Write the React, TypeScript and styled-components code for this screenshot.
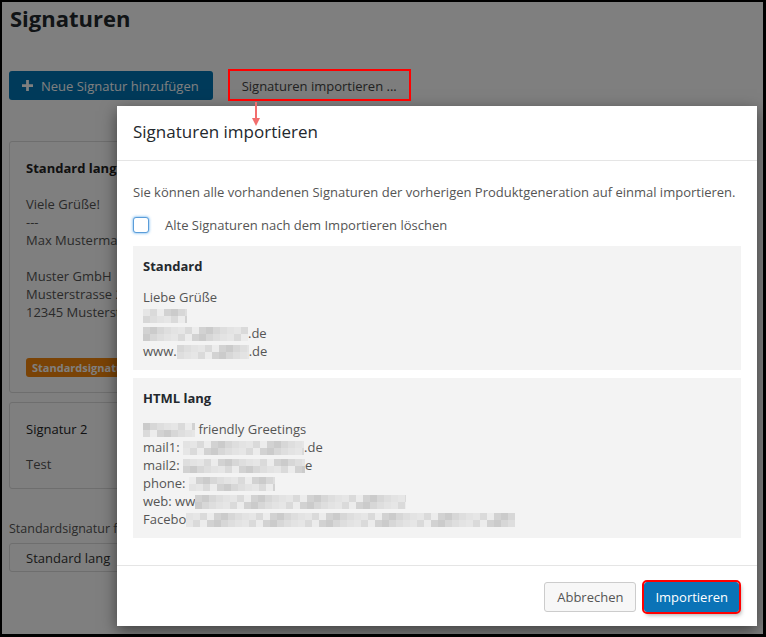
import styled, {createGlobalStyle} from 'styled-components'

const GlobalStyle = createGlobalStyle`
  html, body {
    margin: 0;
    padding: 0;
  }
  body {
    font-family: "Open Sans", "Noto Sans", sans-serif;
    background: #000;
  }
`

const shades = [
  '#dadada',
  '#e6e6e6',
  '#d2d2d2',
  '#ececec',
  '#d7d7d7',
  '#cbcbcb',
  '#e3e3e3',
  '#dedede',
]

// pixelated (redacted) text, drawn as a row of grey cells
function mosaic(width: number, seed: number) {
  const cell = 7
  const stops: string[] = []
  let i = seed % shades.length
  for (let x = 0; x < width; x += cell) {
    stops.push(`${shades[i]} ${x}px ${Math.min(x + cell, width)}px`)
    i = (i * 5 + 3) % shades.length
  }
  return `linear-gradient(90deg, ${stops.join(', ')})`
}

function Redacted({width, seed = 1}: {width: number; seed?: number}) {
  return (
    <Mosaic
      $width={width}
      $top={mosaic(width, seed)}
      $bottom={mosaic(width, seed + 3)}
    />
  )
}

export default function App() {
  return (
    <>
      <GlobalStyle />
      <Frame>
        <Page>
          <H1>Signaturen</H1>
          <Toolbar>
            <PrimaryButton>
              <PlusIcon viewBox="0 0 12 12">
                <path d="M4.5 0h3v4.5H12v3H7.5V12h-3V7.5H0v-3h4.5z" />
              </PlusIcon>
              Neue Signatur hinzufügen
            </PrimaryButton>
            <GhostButton>Signaturen importieren ...</GhostButton>
          </Toolbar>

          <Card>
            <CardTitle $bold>Standard lang</CardTitle>
            <CardBody>
              Viele Grüße!
              <br />
              ---
              <br />
              Max Mustermann
              <br />
              <br />
              Muster GmbH
              <br />
              Musterstrasse 2
              <br />
              12345 Musterstadt
            </CardBody>
            <Badge>Standardsignatur</Badge>
          </Card>

          <Card>
            <CardTitle>Signatur 2</CardTitle>
            <CardBody $gap={17}>Test</CardBody>
          </Card>

          <FieldLabel>Standardsignatur für</FieldLabel>
          <Select>Standard lang</Select>
        </Page>

        <Overlay />

        <Modal>
          <ModalHeader>Signaturen importieren</ModalHeader>
          <ModalBody>
            <Intro>
              Sie können alle vorhandenen Signaturen der vorherigen
              Produktgeneration auf einmal importieren.
            </Intro>
            <CheckRow>
              <Checkbox />
              Alte Signaturen nach dem Importieren löschen
            </CheckRow>
            <SignatureBox>
              <BoxTitle>Standard</BoxTitle>
              <BoxLines>
                Liebe Grüße
                <br />
                <Redacted width={44} seed={1} />
                <br />
                <Redacted width={105} seed={2} />
                .de
                <br />
                www.
                <Redacted width={72} seed={4} />
                .de
              </BoxLines>
            </SignatureBox>
            <SignatureBox>
              <BoxTitle>HTML lang</BoxTitle>
              <BoxLines>
                <Redacted width={52} seed={5} /> friendly Greetings
                <br />
                mail1: <Redacted width={121} seed={6} />
                .de
                <br />
                mail2: <Redacted width={122} seed={7} />
                e
                <br />
                phone: <Redacted width={86} seed={3} />
                <br />
                web: ww
                <Redacted width={211} seed={2} />
                <br />
                Facebo
                <Redacted width={329} seed={6} />
              </BoxLines>
            </SignatureBox>
          </ModalBody>
          <ModalFooter>
            <Button>Abbrechen</Button>
            <Button $primary $highlight>
              Importieren
            </Button>
          </ModalFooter>
        </Modal>

        <Annotation viewBox="0 0 761 632">
          <rect
            x="227"
            y="68"
            width="181"
            height="30"
            fill="none"
            stroke="#ff0000"
            strokeWidth="2"
          />
          <line
            x1="254"
            y1="100"
            x2="254"
            y2="117"
            stroke="#f26d6d"
            strokeWidth="2"
          />
          <polygon points="250,116 258,116 254,124" fill="#f26d6d" />
        </Annotation>
      </Frame>
    </>
  )
}

const Frame = styled.div`
  position: relative;
  width: 766px;
  height: 637px;
  box-sizing: border-box;
  border: 2px solid #000;
  border-right-width: 3px;
  border-bottom-width: 3px;
  background: #fff;
  overflow: hidden;
`

const Page = styled.div`
  padding: 0 7px;
  color: #555;
  font-size: 13px;
`

const H1 = styled.h1`
  margin: 0;
  padding-left: 1px;
  font-size: 22px;
  font-weight: 700;
  line-height: 32px;
  color: #23282d;
`

const Toolbar = styled.div`
  display: flex;
  gap: 16px;
  margin-top: 37px;
`

const PrimaryButton = styled.div`
  display: inline-flex;
  align-items: center;
  gap: 8px;
  height: 29px;
  padding: 0 14px 0 13px;
  box-sizing: border-box;
  border-radius: 3px;
  background: #0074b4;
  color: #fff;
  font-size: 13px;
`

const PlusIcon = styled.svg`
  width: 11px;
  height: 11px;
  fill: #fff;
`

const GhostButton = styled.div`
  display: inline-flex;
  align-items: center;
  height: 29px;
  padding: 0 13px;
  color: #444;
  font-size: 13px;
  background: #fafafa;
`

const Card = styled.div`
  margin-top: 41px;
  padding: 17px 16px 15px;
  border: 1px solid #dcdcdc;
  border-radius: 3px;
  background: #fff;

  & + & {
    margin-top: 9px;
  }
`

const CardTitle = styled.div<{$bold?: boolean}>`
  font-size: 13px;
  line-height: 18px;
  font-weight: ${p => (p.$bold ? 700 : 400)};
  color: #222;
`

const CardBody = styled.div<{$gap?: number}>`
  margin-top: ${p => p.$gap ?? 18}px;
  line-height: 18px;
  color: #555;
`

const Badge = styled.div`
  display: inline-block;
  margin-top: 37px;
  padding: 0 6px;
  height: 19px;
  line-height: 19px;
  border-radius: 3px;
  background: #f5870c;
  color: #fff;
  font-size: 11px;
  font-weight: 700;
`

const FieldLabel = styled.div`
  margin-top: 31px;
  line-height: 18px;
  font-size: 12.5px;
  color: #555;
`

const Select = styled.div`
  margin-top: 5px;
  width: 210px;
  height: 29px;
  box-sizing: border-box;
  padding: 0 16px;
  display: flex;
  align-items: center;
  border: 1px solid #dcdcdc;
  border-radius: 3px;
  background: #fff;
  color: #333;
`

const Overlay = styled.div`
  position: absolute;
  inset: 0;
  background: rgba(0, 0, 0, 0.5);
`

const Modal = styled.div`
  position: absolute;
  left: 115px;
  top: 104px;
  width: 640px;
  background: #fff;
  box-shadow: 0 5px 15px rgba(0, 0, 0, 0.5);
  color: #555;
  font-size: 13px;
`

const ModalHeader = styled.div`
  padding: 14px 16px 16px;
  border-bottom: 1px solid #e5e5e5;
  font-size: 17px;
  line-height: 24px;
  color: #23282d;
`

const ModalBody = styled.div`
  padding: 22px 16px 27px;
  display: flex;
  flex-direction: column;
  gap: 8px;
`

const Intro = styled.div`
  line-height: 18px;
`

const CheckRow = styled.label`
  display: flex;
  align-items: center;
  gap: 16px;
  margin: 7px 0 4px;
  line-height: 18px;
`

const Checkbox = styled.span`
  width: 16px;
  height: 16px;
  box-sizing: border-box;
  border: 1px solid #5b9dd9;
  border-radius: 3px;
  background: #fff;
  box-shadow: 0 0 3px rgba(30, 140, 230, 0.8);
`

const SignatureBox = styled.div`
  padding: 11px 10px 10px;
  background: #f3f3f3;
`

const BoxTitle = styled.div`
  font-weight: 700;
  line-height: 18px;
  color: #23282d;
`

const BoxLines = styled.div`
  margin-top: 13px;
  line-height: 18px;
  color: #555;
`

const Mosaic = styled.span<{$width: number; $top: string; $bottom: string}>`
  display: inline-block;
  width: ${p => p.$width}px;
  height: 14px;
  vertical-align: -3px;
  background:
    ${p => p.$top} top / 100% 50% no-repeat,
    ${p => p.$bottom} bottom / 100% 50% no-repeat;
`

const ModalFooter = styled.div`
  display: flex;
  justify-content: flex-end;
  gap: 8px;
  padding: 16px 18px 14px 16px;
  border-top: 1px solid #e5e5e5;
`

const Button = styled.div<{$primary?: boolean; $highlight?: boolean}>`
  height: 30px;
  box-sizing: border-box;
  display: inline-flex;
  align-items: center;
  padding: 0 ${p => (p.$primary ? 10 : 12)}px;
  border-radius: 3px;
  font-size: 13px;
  border: 1px solid ${p => (p.$primary ? '#0a73b7' : '#ccc')};
  background: ${p => (p.$primary ? '#0a73b7' : '#f7f7f7')};
  color: ${p => (p.$primary ? '#fff' : '#555')};
  outline: ${p => (p.$highlight ? '2px solid #ff0000' : 'none')};
  box-shadow: ${p =>
    p.$highlight ? '2px 3px 4px rgba(0, 0, 0, 0.35)' : 'none'};
`

const Annotation = styled.svg`
  position: absolute;
  inset: 0;
  width: 761px;
  height: 632px;
  pointer-events: none;
`
